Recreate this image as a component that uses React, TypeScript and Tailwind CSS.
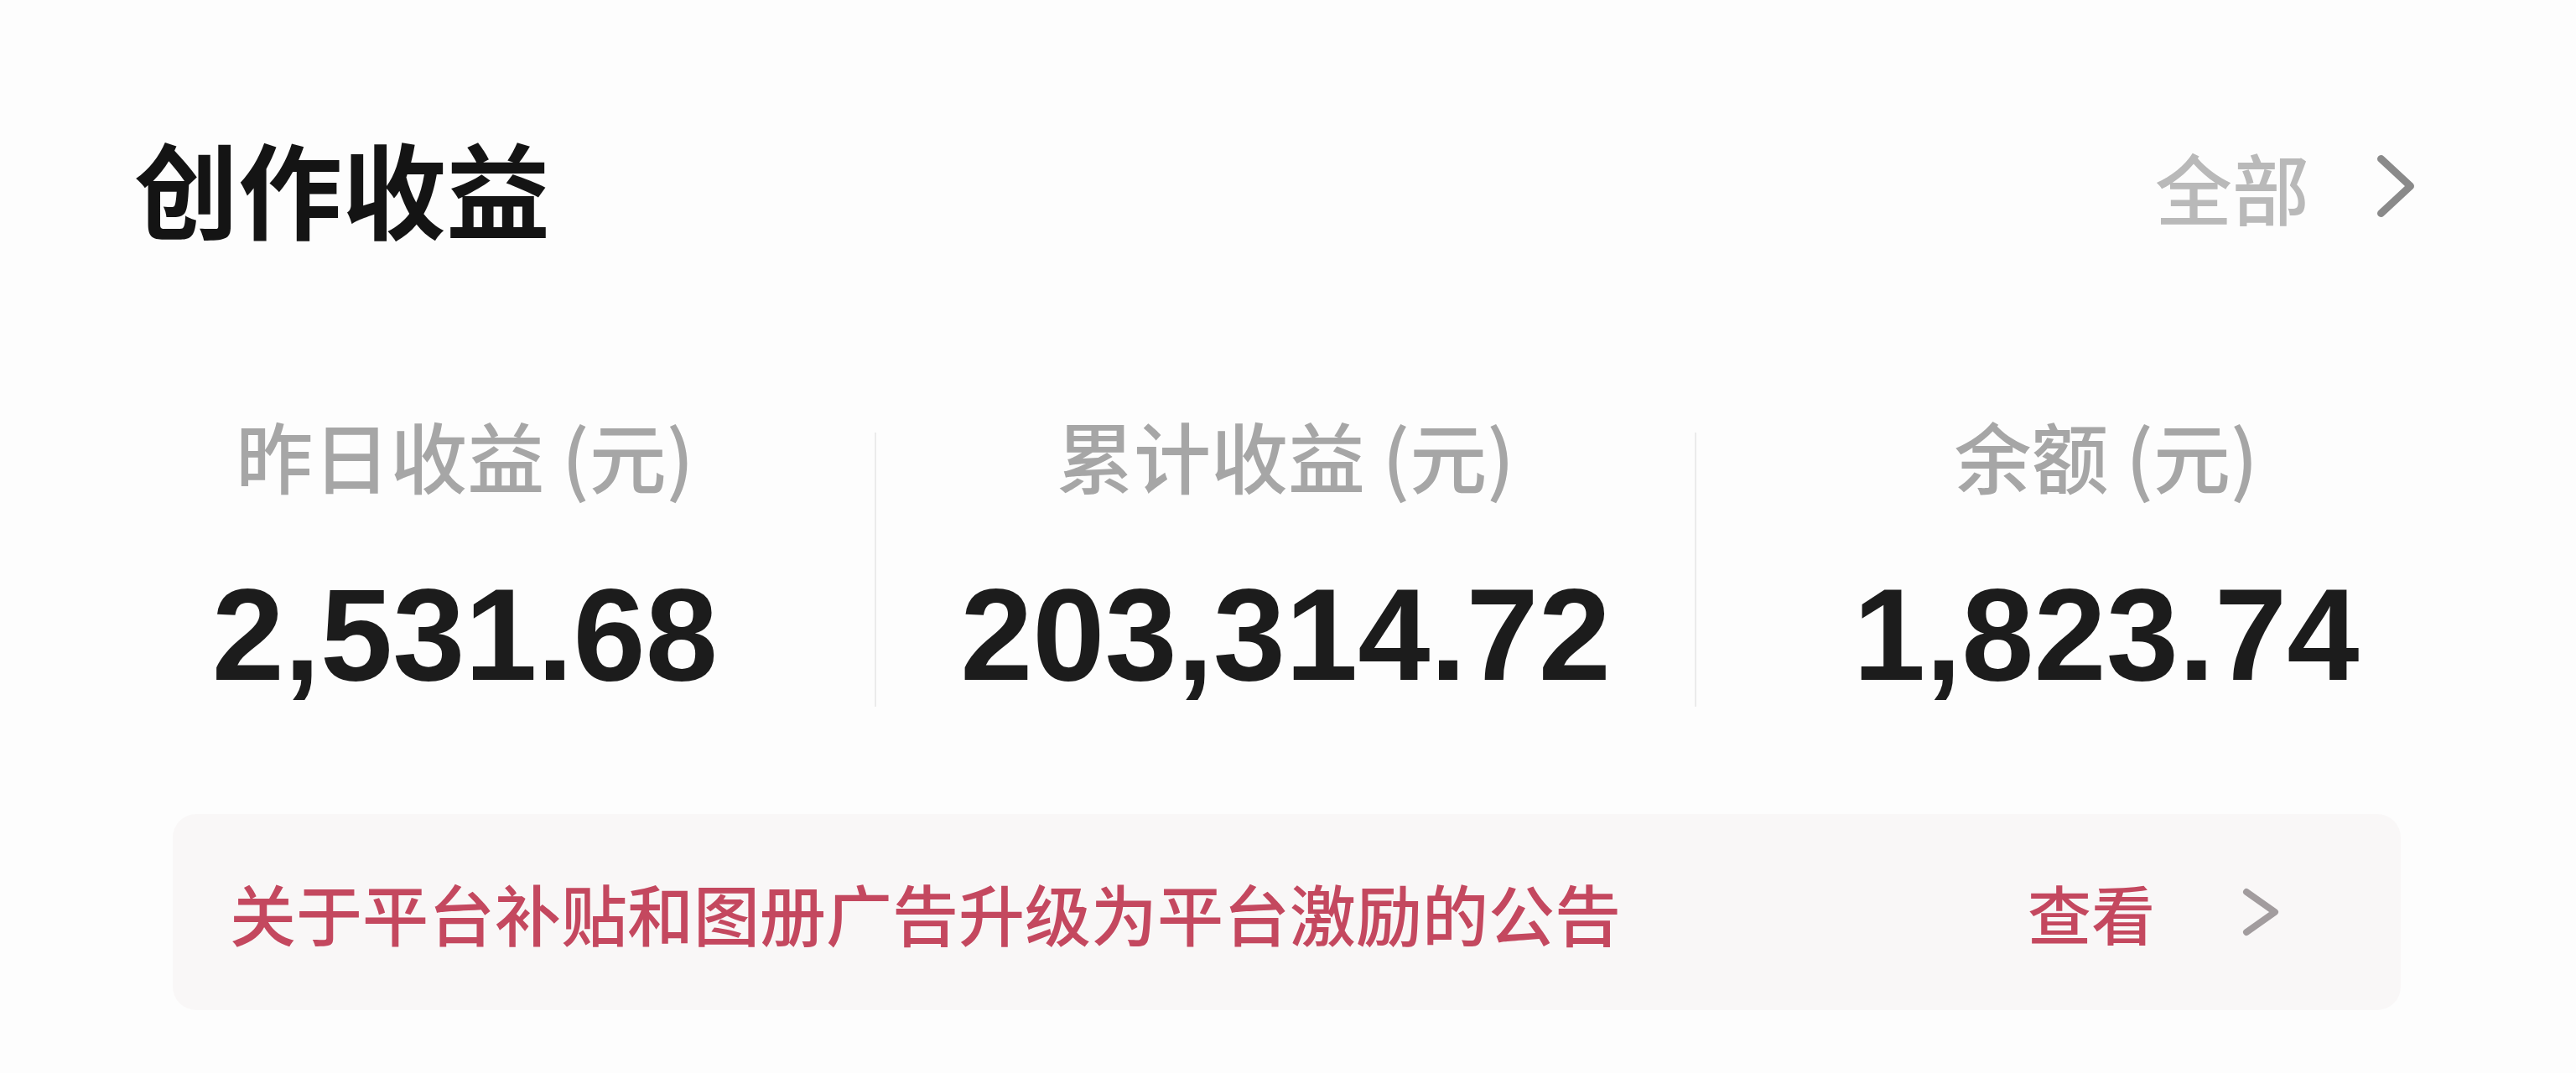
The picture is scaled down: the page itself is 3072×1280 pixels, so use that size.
import React from "react";

type Stat = { label: string; value: string };

const stats: Stat[] = [
  { label: "昨日收益 (元)", value: "2,531.68" },
  { label: "累计收益 (元)", value: "203,314.72" },
  { label: "余额 (元)", value: "1,823.74" },
];

function Chevron({ className, w, h, stroke }: { className: string; w: number; h: number; stroke: number }) {
  const p = stroke / 2 + 1;
  return (
    <svg width={w} height={h} viewBox={`0 0 ${w} ${h}`} className={className} fill="none">
      <path
        d={`M${p} ${p} L${w - p} ${h / 2} L${p} ${h - p}`}
        stroke="currentColor"
        strokeWidth={stroke}
        strokeLinecap="round"
        strokeLinejoin="round"
      />
    </svg>
  );
}

export default function App() {
  return (
    <div className="flex h-[1280px] w-[3072px] flex-col overflow-hidden bg-[#fdfdfd] font-['Noto_Sans_CJK_SC',sans-serif]">
      {/* header */}
      <div className="flex items-center justify-between pl-[160px] pr-[192px] pt-[160px]">
        <h1 className="text-[124px] font-bold leading-none text-[#141414]">创作收益</h1>
        <button type="button" className="flex items-center gap-[80px]">
          <span className="text-[92px] font-medium leading-none text-[#b9b9b9]">全部</span>
          <Chevron className="text-[#8a8a8a]" w={46} h={76} stroke={9} />
        </button>
      </div>

      {/* stats */}
      <div className="ml-[66px] mt-[212px] flex w-[2934px] items-start">
        {stats.map((stat, i) => (
          <React.Fragment key={stat.label}>
            {i > 0 ? <div className="mt-[20px] h-[327px] w-[2px] shrink-0 bg-[#ebebeb]" /> : null}
            <div className="flex flex-1 flex-col items-center">
              <span className="text-[92px] font-medium leading-none text-[#a6a6a6]">{stat.label}</span>
              <span className="mt-[92px] font-['Liberation_Sans',sans-serif] text-[155px] font-bold leading-none text-[#1c1c1c]">
                {stat.value}
              </span>
            </div>
          </React.Fragment>
        ))}
      </div>

      {/* announcement */}
      <div className="ml-[206px] mt-[128px] flex h-[234px] w-[2657px] items-center rounded-[28px] bg-[#f9f7f7] pl-[68px] pr-[145px]">
        <span className="flex-1 text-[79px] font-medium leading-none text-[#c4485f]">
          关于平台补贴和图册广告升级为平台激励的公告
        </span>
        <span className="text-[76px] font-medium leading-none text-[#c4485f]">查看</span>
        <Chevron className="ml-[104px] text-[#a29c9e]" w={44} h={58} stroke={8} />
      </div>
    </div>
  );
}
